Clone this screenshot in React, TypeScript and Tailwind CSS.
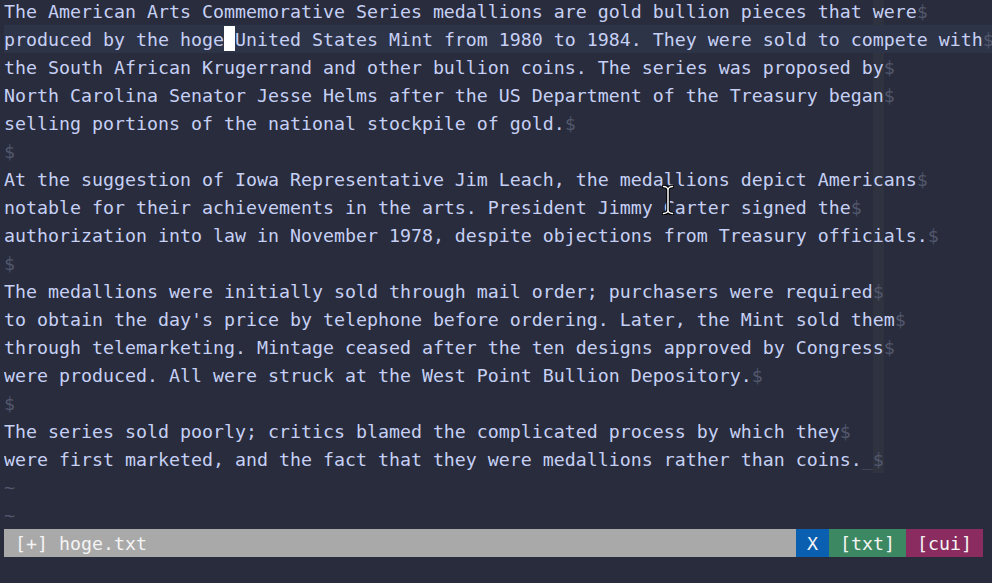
import React from "react";

const LINES: string[] = [
  "The American Arts Commemorative Series medallions are gold bullion pieces that were",
  "produced by the hoge United States Mint from 1980 to 1984. They were sold to compete with",
  "the South African Krugerrand and other bullion coins. The series was proposed by",
  "North Carolina Senator Jesse Helms after the US Department of the Treasury began",
  "selling portions of the national stockpile of gold.",
  "",
  "At the suggestion of Iowa Representative Jim Leach, the medallions depict Americans",
  "notable for their achievements in the arts. President Jimmy Carter signed the",
  "authorization into law in November 1978, despite objections from Treasury officials.",
  "",
  "The medallions were initially sold through mail order; purchasers were required",
  "to obtain the day's price by telephone before ordering. Later, the Mint sold them",
  "through telemarketing. Mintage ceased after the ten designs approved by Congress",
  "were produced. All were struck at the West Point Bullion Depository.",
  "",
  "The series sold poorly; critics blamed the complicated process by which they",
  "were first marketed, and the fact that they were medallions rather than coins.\u0000",
];

type Kind = "txt" | "dim" | "cc" | "ccdim" | "cur";

const CLS: Record<Kind, string> = {
  txt: "text-[#c6d0f5]",
  dim: "text-[#51576d]",
  cc: "inline-block align-top h-[28px] w-[11px] text-[#c6d0f5] bg-[#2f333f]",
  ccdim: "inline-block align-top h-[28px] w-[11px] text-[#51576d] bg-[#2f333f]",
  cur: "inline-block align-top mt-[1px] h-[25px] w-[11px] bg-white text-[#292c3c]",
};

const COLS = 90;
const CC = 79;
const CURSOR_ROW = 1;
const CURSOR_COL = 20;

function Row({ text, idx }: { text: string; idx: number }) {
  const cells: { ch: string; k: Kind }[] = [];
  const chars = Array.from(text);
  chars.forEach((c) => {
    if (c === "\u0000") cells.push({ ch: "_", k: "dim" });
    else cells.push({ ch: c, k: "txt" });
  });
  cells.push({ ch: "$", k: "dim" });
  while (cells.length < COLS) cells.push({ ch: " ", k: "txt" });
  const isCur = idx === CURSOR_ROW;
  if (!isCur && cells[CC]) {
    cells[CC].k = cells[CC].k === "dim" ? "ccdim" : "cc";
  }
  if (isCur) cells[CURSOR_COL].k = "cur";

  const groups: { s: string; k: Kind }[] = [];
  for (const c of cells) {
    const last = groups[groups.length - 1];
    if (last && last.k === c.k && c.k === "txt") last.s += c.ch;
    else if (last && last.k === c.k && c.k === "dim") last.s += c.ch;
    else groups.push({ s: c.ch, k: c.k });
  }
  return (
    <div
      className={`h-[28px] leading-[30px] whitespace-pre overflow-hidden ${
        isCur ? "bg-[#2e3447]" : ""
      }`}
    >
      {groups.map((g, i) => (
        <span key={i} className={CLS[g.k]}>
          {g.s}
        </span>
      ))}
    </div>
  );
}

function IBeam() {
  const d =
    "M1.5 1.5 C4 1.5 6 3 6 5 C6 3 8 1.5 10.5 1.5 M6 5 L6 25 M6 25 C6 27 4 28.5 1.5 28.5 M6 25 C6 27 8 28.5 10.5 28.5";
  return (
    <svg
      className="absolute left-[662px] top-[185px]"
      width="12"
      height="30"
      viewBox="0 0 12 30"
    >
      <g fill="none" strokeLinecap="round" strokeLinejoin="round">
        <path d={d} stroke="#000" strokeWidth="3.6" />
        <path d={d} stroke="#fff" strokeWidth="1.5" />
      </g>
    </svg>
  );
}

export default function App() {
  return (
    <div className="relative h-[583px] w-[992px] overflow-hidden bg-[#292c3c] font-['DejaVu_Sans_Mono',monospace] text-[18.27px]">
      <div className="-mt-[3px] pl-[4px]">
        {LINES.map((l, i) => (
          <Row key={i} text={l} idx={i} />
        ))}
        <div className="h-[28px] leading-[30px] text-[#51576d]">~</div>
        <div className="h-[28px] leading-[30px] text-[#51576d]">~</div>
        <div className="flex h-[28px] w-[979px] leading-[30px] whitespace-pre text-[#f4f4f4] overflow-hidden">
          <span className="flex-1 bg-[#a9a9a9]"> [+] hoge.txt</span>
          <span className="w-[33px] bg-[#0b5fb0]"> X </span>
          <span className="w-[77px] bg-[#3b8862]"> [txt] </span>
          <span className="w-[77px] bg-[#8a2c5f]"> [cui] </span>
        </div>
        <div className="h-[28px]" />
      </div>
      <IBeam />
    </div>
  );
}
